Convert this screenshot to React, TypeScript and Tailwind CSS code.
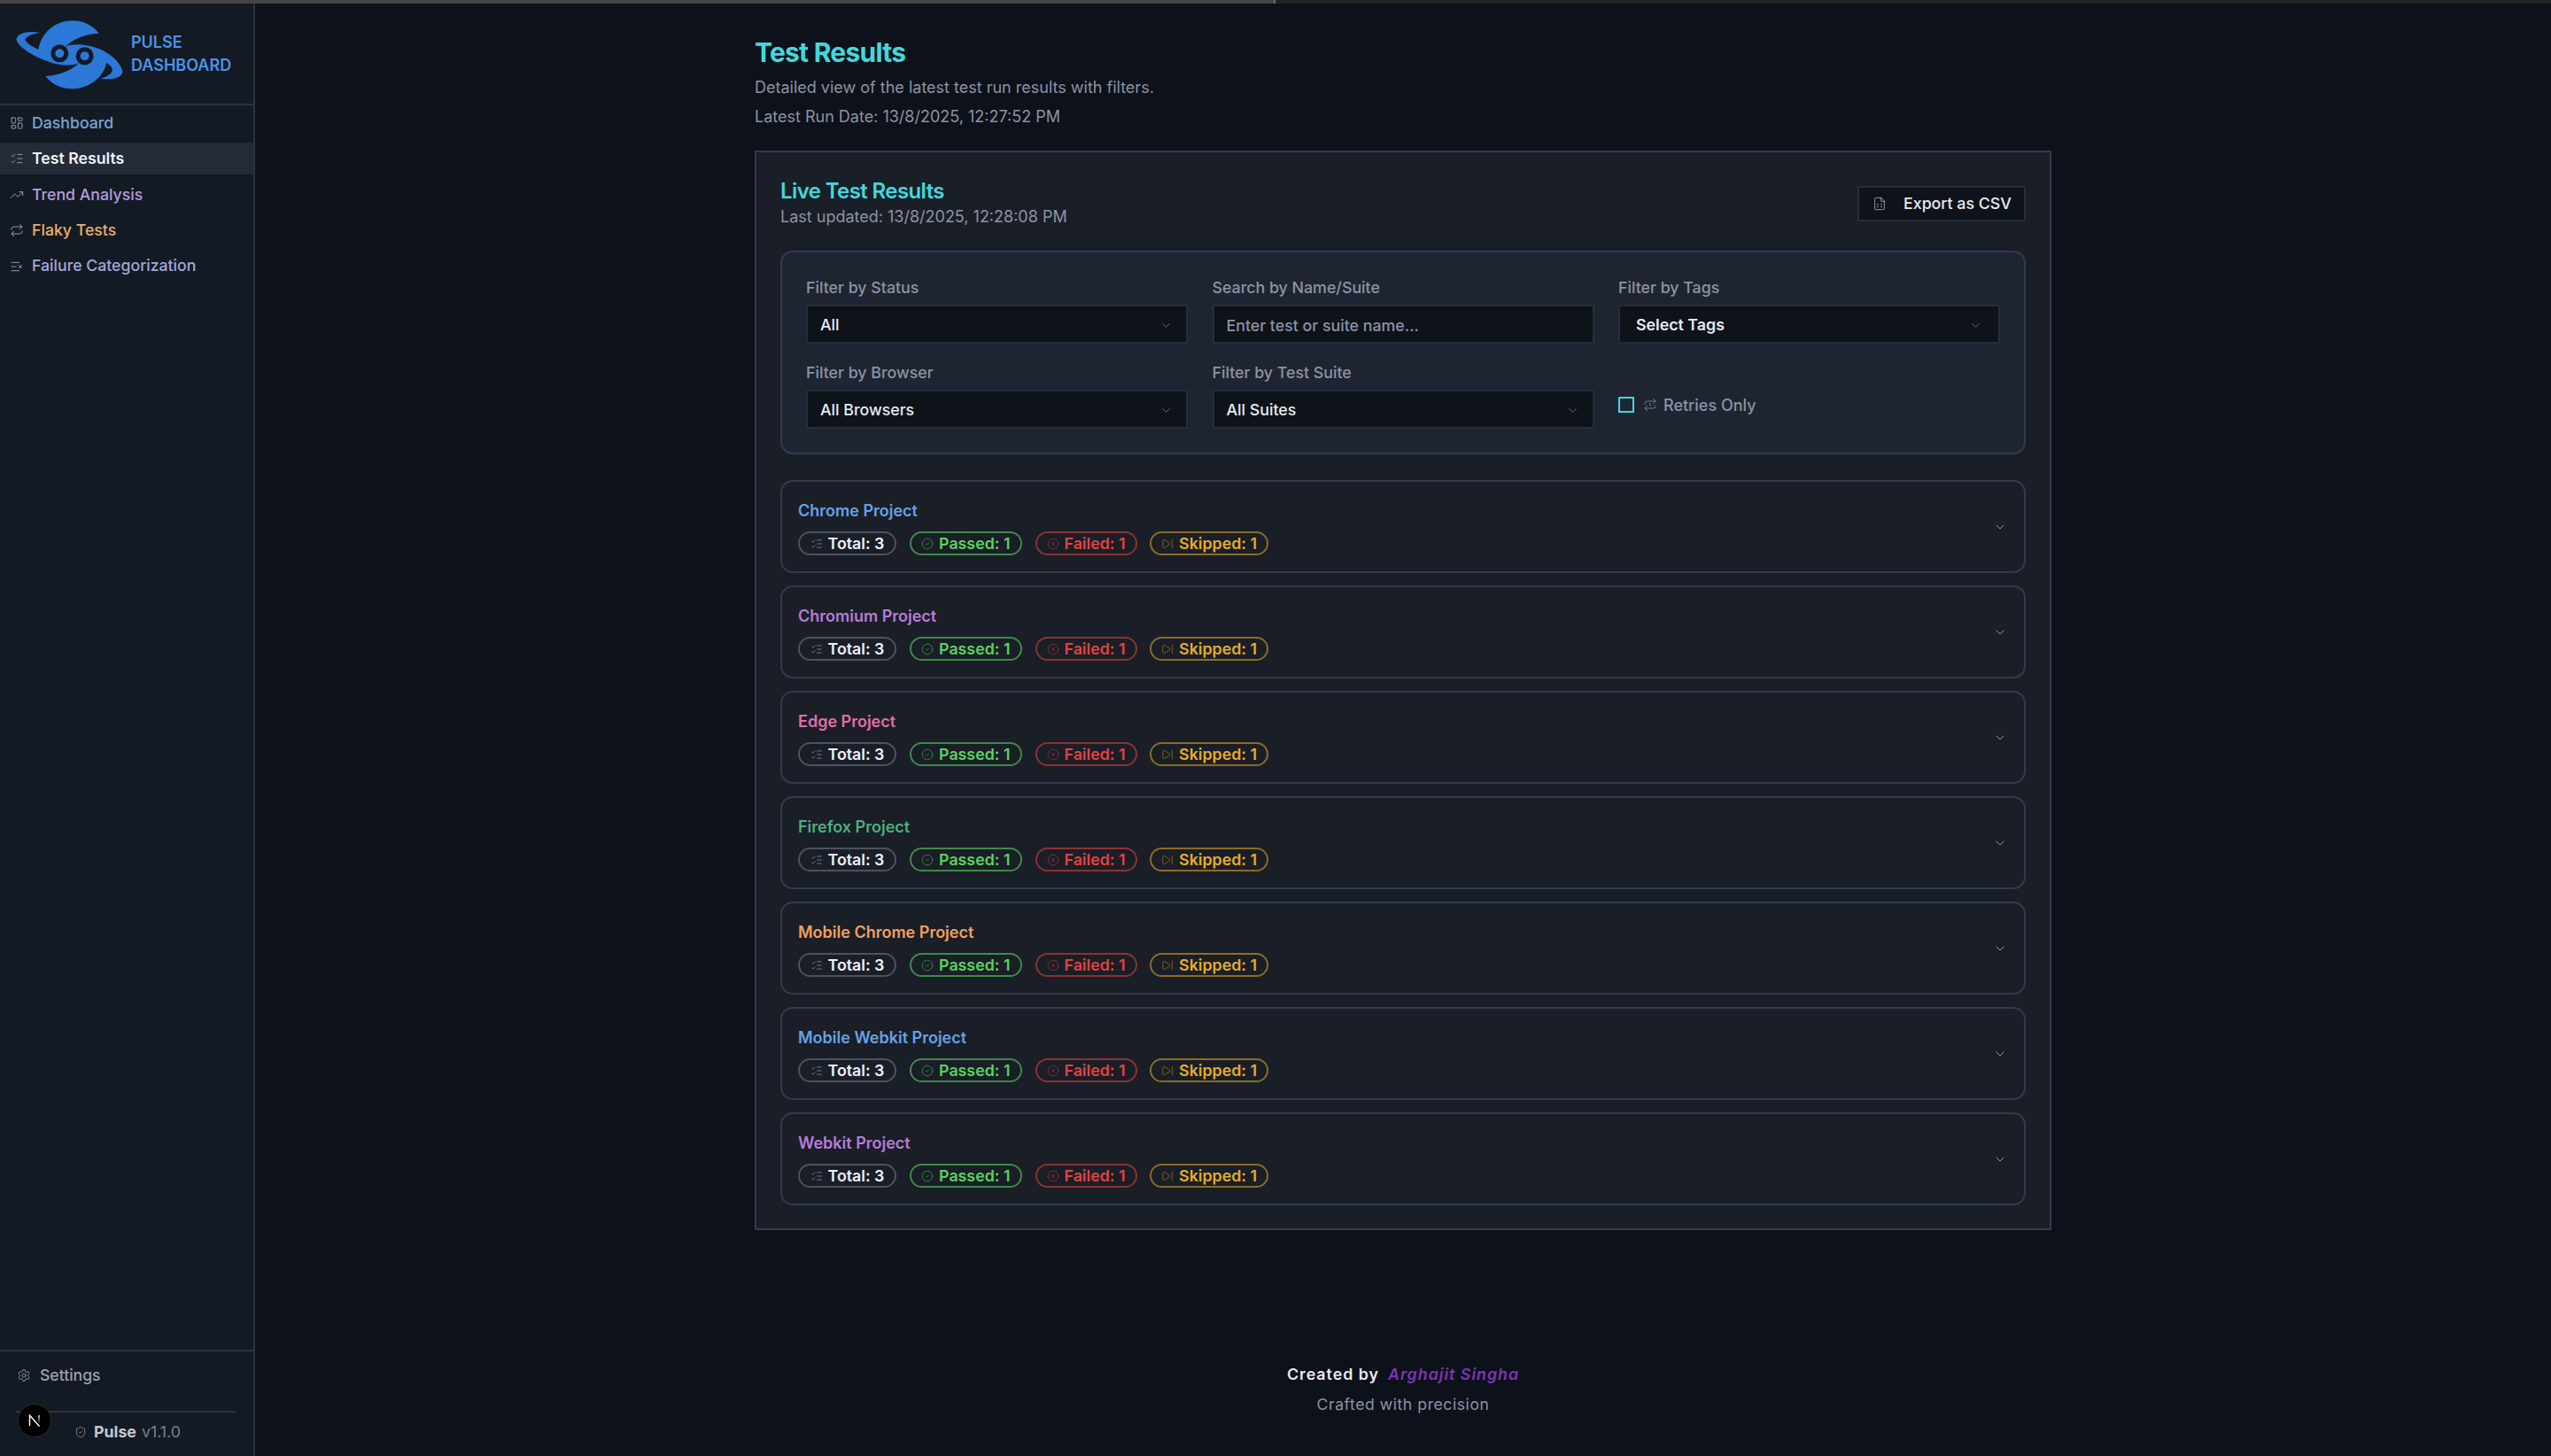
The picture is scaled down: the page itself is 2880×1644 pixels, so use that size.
import { ChevronDown, Settings, ShieldCheck, FileSpreadsheet, ListChecks, TrendingUp, Repeat, LayoutDashboard, ListX, CircleCheck, CircleX, SkipForward, Repeat1 } from "lucide-react";

function Logo() {
  return (
    <svg viewBox="0 0 390 300" width="130" height="100" className="shrink-0">
      <path d="M105 78 C72 70 30 76 25 100 C28 125 90 165 154 182 C179 188 204 189 224 185 L241 180 L240 150 L200 130 L189 127 C209 105 254 81 305 80 C285 55 255 37 215 37 C160 37 110 75 100 135 C80 125 60 115 55 102 C58 90 80 82 105 78 Z" fill="#2b78d6" />
      <path d="M310 234 C345 238 385 232 385 210 C382 180 335 135 275 123 C250 117 225 116 205 120 L188 125 L190 155 L240 178 C220 200 175 224 124 225 C144 250 174 268 214 268 C269 268 322 230 330 180 C345 188 352 198 350 207 C345 220 330 228 310 234 Z" fill="#2b78d6" />
      <circle cx="172" cy="148" r="30" fill="#141a23" />
      <circle cx="257" cy="157" r="30" fill="#141a23" />
      <circle cx="172" cy="148" r="15" fill="#2b78d6" />
      <circle cx="257" cy="157" r="15" fill="#2b78d6" />
    </svg>
  );
}

const nav = [
  { label: "Dashboard", Icon: LayoutDashboard, color: "text-[#6fa8dc]" },
  { label: "Test Results", Icon: ListChecks, color: "text-[#f1f3f7] font-semibold", active: true },
  { label: "Trend Analysis", Icon: TrendingUp, color: "text-[#b39ddb]" },
  { label: "Flaky Tests", Icon: Repeat, color: "text-[#e8ae6c]" },
  { label: "Failure Categorization", Icon: ListX, color: "text-[#a3a8d8]" },
];

const projects = [
  { name: "Chrome Project", color: "text-[#64a3e6]" },
  { name: "Chromium Project", color: "text-[#b87cd6]" },
  { name: "Edge Project", color: "text-[#e06fa8]" },
  { name: "Firefox Project", color: "text-[#4caf7d]" },
  { name: "Mobile Chrome Project", color: "text-[#f0a060]" },
  { name: "Mobile Webkit Project", color: "text-[#64a3e6]" },
  { name: "Webkit Project", color: "text-[#b87cd6]" },
];

function Pill({ w, border, text, Icon, iconColor, label }: { w: string; border: string; text: string; Icon: any; iconColor: string; label: string }) {
  return (
    <span className={`flex h-[27px] items-center justify-center gap-[6px] rounded-full border-2 pt-[1px] text-[17.8px] font-semibold ${w} ${border} ${text}`}>
      <Icon size={14} strokeWidth={1.4} className={iconColor} />
      {label}
    </span>
  );
}

function ProjectCard({ name, color }: { name: string; color: string }) {
  return (
    <div className="flex h-[105px] items-center justify-between rounded-[14px] border-2 border-[#333a4e] bg-[#1a1e27] pl-[18px] pr-[19px]">
      <div className="flex flex-col gap-[11px] pt-[3px]">
        <div className={`text-[18px] font-semibold leading-[24px] ${color}`}>{name}</div>
        <div className="flex gap-[14.5px]">
          <Pill w="w-[111px]" border="border-[#4b5260]" text="text-[#eef0f5]" Icon={ListChecks} iconColor="text-[#858a95]" label="Total: 3" />
          <Pill w="w-[127.5px]" border="border-[#3e8a4a]" text="text-[#5ad25f]" Icon={CircleCheck} iconColor="text-[#3e8a4a]" label="Passed: 1" />
          <Pill w="w-[115px]" border="border-[#8b3232]" text="text-[#e34242]" Icon={CircleX} iconColor="text-[#8b3232]" label="Failed: 1" />
          <Pill w="w-[134px]" border="border-[#8a6d24]" text="text-[#e5ac2b]" Icon={SkipForward} iconColor="text-[#8a6d24]" label="Skipped: 1" />
        </div>
      </div>
      <ChevronDown size={16} strokeWidth={1.25} className="text-[#aab0bc]" />
    </div>
  );
}

function Field({ label, children }: { label: string; children: React.ReactNode }) {
  return (
    <div className="flex w-[431px] flex-col">
      <label className="mb-[6px] text-[17.8px] font-medium leading-[26px] text-[#8c93a5]">{label}</label>
      {children}
    </div>
  );
}

function SelectBox({ value, strong }: { value: string; strong?: boolean }) {
  return (
    <div className={`flex h-[44px] items-center justify-between border-2 border-[#262c39] bg-[#0e1219] pt-[2px] ${strong ? "pl-[18px] pr-[18px] font-semibold" : "pl-[14px] pr-[15px] font-medium"} text-[17.8px] text-[#e8eaf0]`}>
      <span>{value}</span>
      <ChevronDown size={15} strokeWidth={1.1} className="text-[#8f95a3]" />
    </div>
  );
}

export default function App() {
  return (
    <div className="flex h-screen flex-col overflow-hidden bg-[#0d1119] font-['Inter',sans-serif] text-[#e8eaf0]">
      <div className="flex h-[4px] shrink-0">
        <div className="w-[1440px] border-r-2 border-[#6a6a6a] bg-[#444444]" />
        <div className="flex-1 bg-[#232323]" />
      </div>
      <div className="flex min-h-0 flex-1">
        <aside className="flex w-[288px] shrink-0 flex-col border-r-2 border-[#2c3240] bg-[#141a23]">
          <div className="flex h-[115px] shrink-0 items-center gap-[8px] border-b-2 border-[#2c3240] pl-[10px]">
            <Logo />
            <div className="text-[18px] font-semibold leading-[26px] text-[#4a94e8]">
              <div>PULSE</div>
              <div>DASHBOARD</div>
            </div>
          </div>
          <nav className="flex flex-1 flex-col gap-[4.4px] pt-[2px]">
            {nav.map(({ label, Icon, color, active }) => (
              <div key={label} className={`flex h-[36px] items-center gap-[9px] pl-[11px] text-[17.7px] font-medium ${color} ${active ? "bg-[#232a38]" : ""}`}>
                <Icon size={16} strokeWidth={1.25} className="text-[#aeb3bd]" />
                {label}
              </div>
            ))}
          </nav>
          <div className="relative h-[120px] shrink-0 border-t-2 border-[#2c3240] px-[18px]">
            <div className="flex h-[54px] items-center gap-[10px] pl-[1px] text-[17.6px] font-medium text-[#9aa0ad]">
              <Settings size={16} strokeWidth={1.25} />
              Settings
            </div>
            <div className="mr-[2px] mt-[13px] flex h-[39px] items-center border-t-2 border-[#2c3240] pl-[66px] pt-[7px] text-[17.8px] leading-[28px]">
              <ShieldCheck size={14} strokeWidth={1.25} className="mr-[8px] text-[#9aa0ad]" />
              <span className="mr-[6px] font-bold text-[#c4c8d1]">Pulse</span>
              <span className="text-[#7a808d]">v1.1.0</span>
            </div>
            <div className="absolute left-[20px] top-[59px] flex size-[38px] items-center justify-center rounded-full border border-[#2a2a2a] bg-black">
              <svg viewBox="0 0 14 14" width="14" height="14" fill="none">
                <defs>
                  <linearGradient id="nfade" gradientUnits="userSpaceOnUse" x1="0" y1="1" x2="0" y2="10">
                    <stop offset="0" stopColor="#ffffff" />
                    <stop offset="1" stopColor="#ffffff" stopOpacity="0.15" />
                  </linearGradient>
                </defs>
                <path d="M1.5 13V1l11 12.5" stroke="#ffffff" strokeWidth="1.4" />
                <path d="M12 1v9" stroke="url(#nfade)" strokeWidth="1.4" />
              </svg>
            </div>
          </div>
        </aside>
        <main className="flex min-w-0 flex-1 flex-col items-center">
          <div className="w-[1464px]">
            <h1 className="mt-[35px] text-[30px] font-bold leading-[40px] tracking-[-0.75px] text-[#40d9dd]">Test Results</h1>
            <p className="mt-[5px] text-[18px] leading-[30px] text-[#8c93a5]">Detailed view of the latest test run results with filters.</p>
            <p className="mt-[3px] text-[18px] leading-[30px] text-[#8c93a5]">Latest Run Date: 13/8/2025, 12:27:52 PM</p>
            <section className="mt-[23px] flex flex-col border-2 border-[#333a4e] bg-[#1a1e27] px-[27px] pb-[26px] pt-[28px]">
              <div className="flex items-start justify-between">
                <div>
                  <h2 className="text-[24px] font-semibold leading-[32px] tracking-[-0.6px] text-[#40d9dd]">Live Test Results</h2>
                  <p className="text-[18px] leading-[26px] text-[#8c93a5]">Last updated: 13/8/2025, 12:28:08 PM</p>
                </div>
                <button className="mt-[10px] flex h-[40px] w-[190px] items-center gap-[19px] border-2 border-[#262c39] bg-[#0e1219] pl-[15px] text-[17.8px] font-medium text-[#e8eaf0]">
                  <FileSpreadsheet size={16} strokeWidth={1.1} className="text-[#c4c8d1]" />
                  Export as CSV
                </button>
              </div>
              <div className="mt-[25px] grid grid-cols-3 gap-x-[27.5px] gap-y-[20px] rounded-[14px] border-2 border-[#333a4e] bg-[#1f2530] p-[27px]">
                <Field label="Filter by Status"><SelectBox value="All" /></Field>
                <Field label="Search by Name/Suite">
                  <input readOnly placeholder="Enter test or suite name..." className="h-[44px] border-2 border-[#262c39] bg-[#0e1219] px-[14px] pt-[2px] text-[17.8px] font-medium text-[#e8eaf0] placeholder:text-[#8c93a5]" />
                </Field>
                <Field label="Filter by Tags"><SelectBox value="Select Tags" strong /></Field>
                <Field label="Filter by Browser"><SelectBox value="All Browsers" /></Field>
                <Field label="Filter by Test Suite"><SelectBox value="All Suites" /></Field>
                <div className="flex items-center gap-[10px] pt-[22px] text-[18px] font-medium text-[#8c93a5]">
                  <span className="size-[18px] border-2 border-[#40d9dd]" />
                  <span className="flex items-center gap-[7px]">
                    <Repeat1 size={16} strokeWidth={1.1} className="text-[#8f95a3]" />
                    Retries Only
                  </span>
                </div>
              </div>
              <div className="mt-[29px] flex flex-col gap-[14px]">
                {projects.map((p) => <ProjectCard key={p.name} {...p} />)}
              </div>
            </section>
            <footer className="mt-[150px] flex flex-col items-center text-center">
              <div className="flex gap-[10px] text-[17.8px] font-semibold tracking-[1px] text-[#e8eaf0]">
                <span>Created by</span>
                <span className="italic text-[#7b35b8]">Arghajit Singha</span>
              </div>
              <div className="mt-[7px] text-[17.6px] tracking-[0.55px] text-[#8c93a5]">Crafted with precision</div>
            </footer>
          </div>
        </main>
      </div>
    </div>
  );
}
